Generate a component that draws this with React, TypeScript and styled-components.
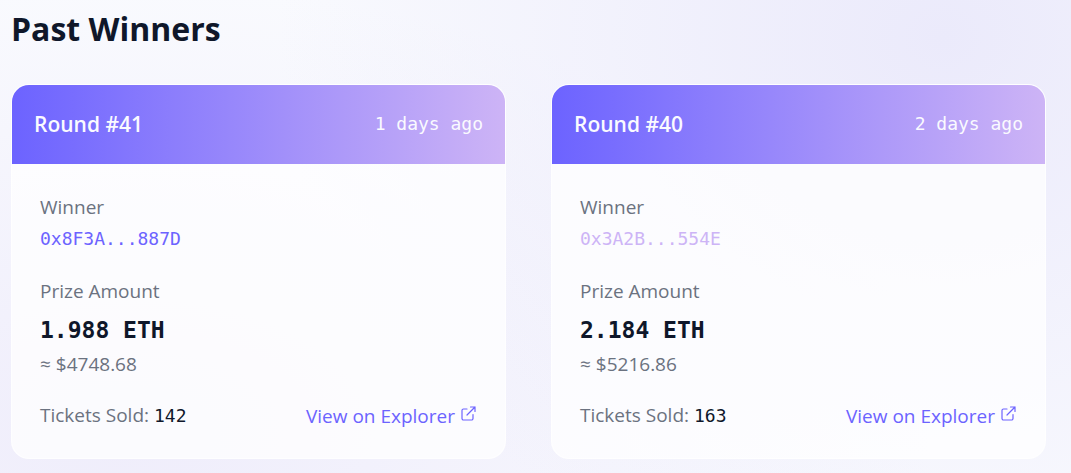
import React from "react";
import styled, { createGlobalStyle } from "styled-components";

const sans = `"Open Sans", "Noto Sans", sans-serif`;
const mono = `"DejaVu Sans Mono", "Liberation Mono", monospace`;

const GlobalStyle = createGlobalStyle`
  *, *::before, *::after { box-sizing: border-box; }
  body {
    margin: 0;
    min-height: 100vh;
    font-family: ${sans};
    font-size: 19px;
    line-height: 28px;
    color: #0f172a;
    background:
      radial-gradient(ellipse 62% 120% at 88% 8%, #ebeafb 0%, rgba(235, 234, 251, 0) 100%),
      radial-gradient(ellipse 75% 95% at 12% 92%, #efedfb 0%, rgba(239, 237, 251, 0) 100%),
      #f9fafe;
  }
`;

const Section = styled.section`
  padding: 7px 25px 14px 11px;
`;

const Title = styled.h2`
  margin: 0 0 33px;
  font-size: 32px;
  line-height: 44px;
  font-weight: 700;
`;

const Grid = styled.div`
  display: grid;
  grid-template-columns: repeat(2, minmax(0, 1fr));
  gap: 45px;
`;

const Card = styled.article`
  overflow: hidden;
  border: 1px solid rgba(255, 255, 255, 0.7);
  border-radius: 18px;
  background: rgba(255, 255, 255, 0.75);
`;

const CardHeader = styled.header`
  display: flex;
  align-items: center;
  justify-content: space-between;
  padding: 23px 22px 24px;
  color: #fafaff;
  background: linear-gradient(90deg, #6c63ff, #cdb4f6);
  line-height: 32px;
`;

const Round = styled.h3`
  margin: 0;
  font-size: 21px;
  font-weight: 600;
`;

const Age = styled.span`
  font-family: ${mono};
  font-size: 18px;
`;

const CardBody = styled.div`
  padding: 29px 28px 28px;
`;

const Fields = styled.dl`
  margin: 0;
`;

const Label = styled.dt`
  color: #6b7280;
`;

const Address = styled.dd<{ $color: string }>`
  margin: 4px 0 24px;
  font-family: ${mono};
  font-size: 18px;
  color: ${(p) => p.$color};
`;

const Prize = styled.dd`
  margin: 9px 0 4px;
  font-family: ${mono};
  font-size: 23px;
  line-height: 32px;
  font-weight: 700;
`;

const Fiat = styled.dd`
  margin: 0;
  color: #6b7280;
`;

const CardFooter = styled.footer`
  display: flex;
  align-items: center;
  justify-content: space-between;
  margin-top: 23px;
`;

const Tickets = styled.span`
  color: #6b7280;
`;

const Count = styled.span`
  font-family: ${mono};
  font-size: 18px;
  color: #0f172a;
`;

const ExplorerLink = styled.a`
  display: inline-flex;
  align-items: center;
  gap: 6px;
  padding-right: 1px;
  color: #6c63ff;
  text-decoration: none;

  svg {
    margin-bottom: 4px;
  }
`;

type Winner = {
  round: number;
  age: string;
  address: string;
  color: string;
  prize: string;
  fiat: string;
  tickets: number;
};

const winners: Winner[] = [
  { round: 41, age: "1 days ago", address: "0x8F3A...887D", color: "#6c63ff", prize: "1.988 ETH", fiat: "$4748.68", tickets: 142 },
  { round: 40, age: "2 days ago", address: "0x3A2B...554E", color: "#cdb4f6", prize: "2.184 ETH", fiat: "$5216.86", tickets: 163 },
];

const ExternalIcon = () => (
  <svg width="15" height="15" viewBox="0 0 15 15" fill="none" stroke="currentColor" strokeWidth="1.2" strokeLinecap="round" strokeLinejoin="round" aria-hidden="true">
    <path d="M6 3H2.500A1.500 1.500 0 0 0 1 4.500v8A1.500 1.500 0 0 0 2.500 14h8a1.500 1.500 0 0 0 1.500-1.500V8.500M9.500 1H14v4.500M14 1L6 9" />
  </svg>
);

const WinnerCard = ({ winner }: { winner: Winner }) => (
  <Card>
    <CardHeader>
      <Round>Round #{winner.round}</Round>
      <Age>{winner.age}</Age>
    </CardHeader>
    <CardBody>
      <Fields>
        <Label>Winner</Label>
        <Address $color={winner.color}>{winner.address}</Address>
        <Label>Prize Amount</Label>
        <Prize>{winner.prize}</Prize>
        <Fiat>≈ {winner.fiat}</Fiat>
      </Fields>
      <CardFooter>
        <Tickets>
          Tickets Sold: <Count>{winner.tickets}</Count>
        </Tickets>
        <ExplorerLink href="#">
          View on Explorer
          <ExternalIcon />
        </ExplorerLink>
      </CardFooter>
    </CardBody>
  </Card>
);

export default function App() {
  return (
    <>
      <GlobalStyle />
      <Section>
        <Title>Past Winners</Title>
        <Grid>
          {winners.map((winner) => (
            <WinnerCard key={winner.round} winner={winner} />
          ))}
        </Grid>
      </Section>
    </>
  );
}
